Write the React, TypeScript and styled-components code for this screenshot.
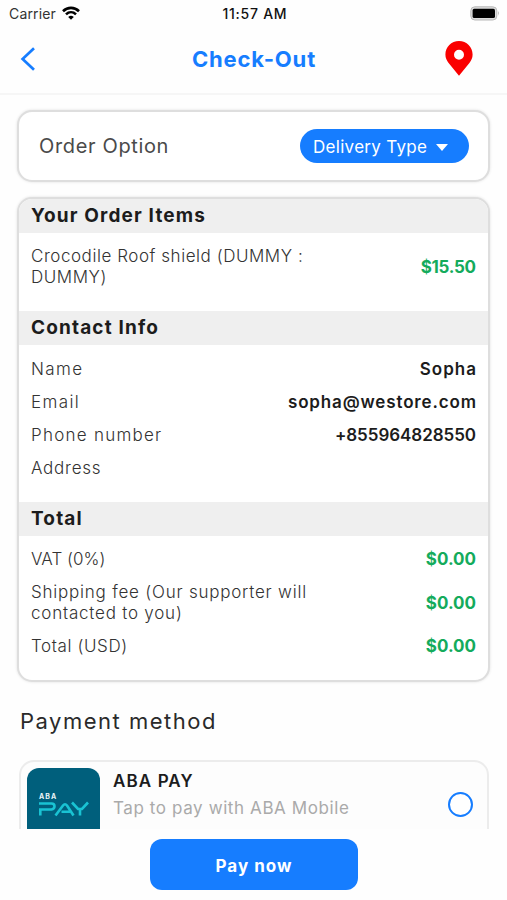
import React from "react";
import styled, { createGlobalStyle } from "styled-components";

const blue = "#167dff";
const green = "#14ab5c";

const GlobalStyle = createGlobalStyle`
  * { box-sizing: border-box; }
  body { margin: 0; background: #fefefe; font-family: Inter, "Open Sans", sans-serif; color: #1c1c1c; }
`;

const Screen = styled.div`
  height: 900px;
  display: flex;
  flex-direction: column;
  overflow: hidden;
  background: #fefefe;
`;

const StatusBar = styled.div`
  height: 27px;
  flex: none;
  display: grid;
  grid-template-columns: 1fr auto 1fr;
  align-items: center;
  padding: 0 7px 1px 9px;
  font-size: 14px;
  svg { display: block; }
`;

const Carrier = styled.div`
  display: flex;
  align-items: center;
  gap: 6px;
  color: #333;
  letter-spacing: 0.15px;
`;

const Clock = styled.div`
  font-weight: 500;
  color: #111;
  letter-spacing: 0.75px;
  margin-right: -0.75px;
`;

const Battery = styled.div`
  justify-self: end;
`;

const Header = styled.header`
  height: 68px;
  flex: none;
  display: grid;
  grid-template-columns: 60px 1fr 60px;
  align-items: center;
  padding: 0 17px 3px 20px;
  border-bottom: 2px solid #f6f6f6;
  svg { display: block; }
`;

const Title = styled.h1`
  margin: 0;
  text-align: center;
  font-size: 22px;
  line-height: 28px;
  font-weight: 700;
  letter-spacing: 0.85px;
  padding-right: 2px;
  color: ${blue};
`;

const PinButton = styled.div`
  justify-self: end;
  padding-right: 17px;
`;

const Content = styled.main`
  height: 734px;
  flex: none;
  overflow: hidden;
  padding: 15px 17px 0 17px;
`;

const Card = styled.section`
  border: 2px solid #dedede;
  border-radius: 15px;
  background: #fff;
  overflow: hidden;
  box-shadow: 0 0 3px rgba(0, 0, 0, 0.12);
`;

const OptionCard = styled(Card)`
  height: 72px;
  display: flex;
  align-items: center;
  justify-content: space-between;
  padding: 0 19px 0 20px;
  margin-bottom: 15px;
`;

const OptionLabel = styled.span`
  font-size: 20px;
  font-weight: 400;
  letter-spacing: 0.65px;
  color: #4a4a4a;
`;

const TypeButton = styled.div`
  width: 169px;
  height: 34px;
  border-radius: 17px;
  background: ${blue};
  color: #fff;
  display: flex;
  align-items: center;
  padding: 2px 0 0 13px;
  gap: 9px;
  font-size: 17px;
  letter-spacing: 0.3px;
`;

const OrderCard = styled(Card)`
  height: 485px;
`;

const SectionHead = styled.h2`
  margin: 0;
  height: 34px;
  padding-left: 12px;
  background: #efefef;
  font-size: 19px;
  line-height: 34px;
  font-weight: 700;
  letter-spacing: 1.15px;
`;

const Rows = styled.div<{ $top?: number }>`
  display: flex;
  flex-direction: column;
  gap: 12px;
  padding: ${(p) => p.$top ?? 13}px 12px 23px;
`;

const Row = styled.div`
  display: flex;
  align-items: center;
  justify-content: space-between;
  font-size: 17px;
  line-height: 21px;
`;

const Label = styled.span<{ $ls?: number }>`
  font-weight: 300;
  color: #333;
  white-space: pre-line;
  letter-spacing: ${(p) => p.$ls ?? 0}px;
`;

const Value = styled.span<{ $money?: boolean; $ls?: number }>`
  font-weight: ${(p) => (p.$money ? 700 : 600)};
  color: ${(p) => (p.$money ? green : "#1c1c1c")};
  letter-spacing: ${(p) => p.$ls ?? 0}px;
  margin-right: ${(p) => -(p.$ls ?? 0)}px;
`;

const PaymentTitle = styled.h2`
  margin: 24px 0 24px 3px;
  font-size: 22px;
  line-height: 30px;
  font-weight: 400;
  letter-spacing: 1.5px;
  color: #2a2a2a;
`;

const Method = styled.div`
  height: 96px;
  margin: 0 1px 0 2px;
  padding: 6px;
  display: flex;
  border: 2px solid #ececec;
  border-radius: 15px;
  background: #fdfdfd;
`;

const Logo = styled.div`
  width: 73px;
  height: 74px;
  border-radius: 12px 12px 0 0;
  background: #005f7c;
  flex: none;
  svg { display: block; }
`;

const MethodText = styled.div`
  flex: 1;
  padding: 1px 0 0 13px;
`;

const MethodName = styled.div`
  font-size: 17px;
  line-height: 27px;
  margin-top: -1px;
  font-weight: 600;
  letter-spacing: 1.1px;
`;

const MethodHint = styled.div`
  font-size: 17px;
  line-height: 27px;
  letter-spacing: 0.6px;
  color: #aaa;
`;

const Radio = styled.div`
  width: 25px;
  height: 25px;
  margin: 24px 8px 0 0;
  border: 2px solid ${blue};
  border-radius: 50%;
  background: #fff;
`;

const Footer = styled.footer`
  flex: 1;
  display: flex;
  justify-content: center;
  padding-top: 10px;
`;

const PayButton = styled.button`
  width: 208px;
  height: 51px;
  border: 0;
  border-radius: 12px;
  background: ${blue};
  color: #fff;
  font: 700 17px Inter, sans-serif;
  letter-spacing: 1px;
  padding: 2px 5px 0 6px;
`;

const contact = [
  { label: "Name", ls: 1.4, value: "Sopha", valueLs: 1 },
  { label: "Email", ls: 1.4, value: "sopha@westore.com", valueLs: 0.85 },
  { label: "Phone number", ls: 1.25, value: "+855964828550", valueLs: -0.05 },
  { label: "Address", ls: 0.75, value: "", valueLs: 0 },
];

const totals = [
  { label: "VAT (0%)", ls: 0.05, value: "$0.00" },
  { label: "Shipping fee (Our supporter will\ncontacted to you)", ls: 0.78, value: "$0.00" },
  { label: "Total (USD)", ls: 0.6, value: "$0.00" },
];

export default function App() {
  return (
    <>
      <GlobalStyle />
      <Screen>
        <StatusBar>
          <Carrier>
            Carrier
            <svg width="18" height="14" viewBox="0 0 18 14" fill="none" stroke="#000" strokeWidth="2.6">
              <path d="M1 5.2C5.6.7 12.4.7 17 5.2" />
              <path d="M4 8.4C6.9 5.6 11.1 5.6 14 8.4" />
              <path d="M9 13.8 6.2 10.9Q9 8.7 11.8 10.9Z" fill="#000" stroke="none" />
            </svg>
          </Carrier>
          <Clock>11:57 AM</Clock>
          <Battery>
            <svg width="30" height="15" viewBox="0 0 30 15">
              <rect x="0.8" y="0.8" width="26" height="13.2" rx="4" fill="#ddd" stroke="#b8b8b8" strokeWidth="1" />
              <rect x="2.6" y="2.8" width="22.4" height="9.2" rx="1.600" fill="#000" />
              <path d="M28.2 5q1.6 2.4 0 4.8z" fill="#999" />
            </svg>
          </Battery>
        </StatusBar>
        <Header>
          <svg width="16" height="24" viewBox="0 0 16 24" fill="none" stroke={blue} strokeWidth="2.7">
            <path d="M14 1.2 2.6 12 14 22.8" />
          </svg>
          <Title>Check-Out</Title>
          <PinButton>
            <svg width="28" height="35" viewBox="0 0 28 35">
              <path
                fillRule="evenodd"
                fill="#fa0000"
                d="M14 0C6.3 0 .4 6 .4 13.6c0 3.4 1.3 6 3.2 8.5L14 34.8l10.4-12.7c1.9-2.5 3.2-5.1 3.2-8.5C27.6 6 21.7 0 14 0Zm0 8.8a5 5 0 1 1 0 10 5 5 0 0 1 0-10Z"
              />
            </svg>
          </PinButton>
        </Header>
        <Content>
          <OptionCard>
            <OptionLabel>Order Option</OptionLabel>
            <TypeButton>
              Delivery Type
              <svg width="12" height="7" viewBox="0 0 12 7">
                <path d="M0 0h12L6 7z" fill="#fff" />
              </svg>
            </TypeButton>
          </OptionCard>
          <OrderCard>
            <SectionHead>Your Order Items</SectionHead>
            <Rows>
              <Row>
                <Label $ls={0.55}>{"Crocodile Roof shield (DUMMY :\nDUMMY)"}</Label>
                <Value $money $ls={-0.3}>$15.50</Value>
              </Row>
            </Rows>
            <SectionHead>Contact Info</SectionHead>
            <Rows $top={14}>
              {contact.map((r) => (
                <Row key={r.label}>
                  <Label $ls={r.ls}>{r.label}</Label>
                  <Value $ls={r.valueLs}>{r.value}</Value>
                </Row>
              ))}
            </Rows>
            <SectionHead>Total</SectionHead>
            <Rows>
              {totals.map((r) => (
                <Row key={r.label}>
                  <Label $ls={r.ls}>{r.label}</Label>
                  <Value $money>{r.value}</Value>
                </Row>
              ))}
            </Rows>
          </OrderCard>
          <PaymentTitle>Payment method</PaymentTitle>
          <Method>
            <Logo>
              <svg width="73" height="61" viewBox="0 0 73 61" fill="none">
                <text x="12" y="30.5" fill="#e8f4f7" fontSize="7" fontWeight="700" letterSpacing="1.1">ABA</text>
                <g stroke="#19c3d3" strokeWidth="2.6">
                  <path d="M12 35.500H24.500Q27.500 35.500 27.500 38.300T24.500 41.500H13.300V47.500" />
                  <path d="M28.500 47.500 36 37.500Q38 35 40 37.500L46.500 47.500M34.500 43.800H43" />
                  <path d="M45 34.500 51 41H55L61 34.500M53 41V47.500" />
                </g>
              </svg>
            </Logo>
            <MethodText>
              <MethodName>ABA PAY</MethodName>
              <MethodHint>Tap to pay with ABA Mobile</MethodHint>
            </MethodText>
            <Radio />
          </Method>
        </Content>
        <Footer>
          <PayButton>Pay now</PayButton>
        </Footer>
      </Screen>
    </>
  );
}
